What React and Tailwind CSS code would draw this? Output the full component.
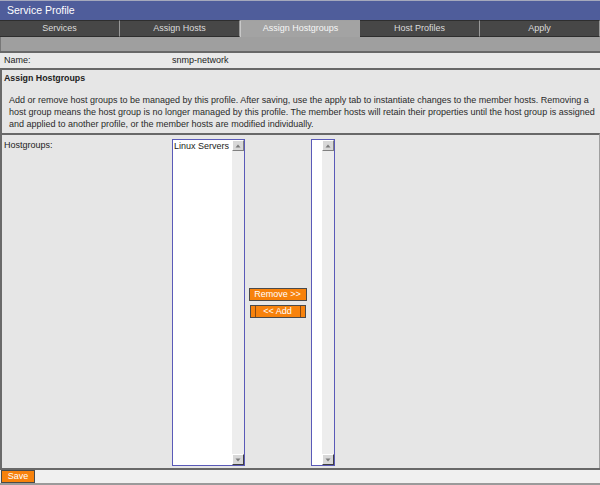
import React from 'react';

const tabs = ['Services', 'Assign Hosts', 'Assign Hostgroups', 'Host Profiles', 'Apply'];

function ScrollBar() {
  return (
    <div className="w-[12px] h-full flex flex-col bg-[#ededed]">
      <div className="h-[11px] w-[12px] bg-[#d8d8d8] border-t border-l border-t-white border-l-white border-r border-b border-r-[#808080] border-b-[#808080] flex items-center justify-center">
        <svg width="6" height="4" viewBox="0 0 6 4"><path d="M3 0.5 L5.5 3.5 L0.5 3.5 Z" fill="#7a7a7a" /></svg>
      </div>
      <div className="flex-1" />
      <div className="h-[11px] w-[12px] bg-[#d8d8d8] border-t border-l border-t-white border-l-white border-r border-b border-r-[#404040] border-b-[#404040] flex items-center justify-center">
        <svg width="6" height="4" viewBox="0 0 6 4"><path d="M0.5 0.5 L5.5 0.5 L3 3.5 Z" fill="#7a7a7a" /></svg>
      </div>
    </div>
  );
}

function ListBox({ width, items = [] }) {
  return (
    <div className={`${width} h-[327px] border border-[#5a5ab8] bg-white flex`}>
      <div className="flex-1 min-w-0 overflow-hidden pl-[1px] pt-[1px] text-[9px] leading-[11px] text-[#222] whitespace-nowrap">
        {items.map((it) => (
          <div key={it}>{it}</div>
        ))}
      </div>
      <ScrollBar />
    </div>
  );
}

export default function App() {
  return (
    <div
      className="w-[600px] h-[485px] flex flex-col bg-[#e6e6e6] overflow-hidden"
      style={{ fontFamily: '"Liberation Sans", Arial, sans-serif' }}
    >
      {/* title */}
      <div className="h-[20px] border-t border-[#a4a8bc] bg-[#4f5d9b] text-white text-[10.5px] pl-[7px] flex items-center">
        Service Profile
      </div>

      {/* tabs */}
      <div className="h-[17px] grid grid-cols-5 bg-[#a1a1a1]">
        {tabs.map((t, i) =>
          i === 2 ? (
            <div key={t} className="mt-[1px] bg-[#a3a3a3] border-l border-[#c8c8c8] text-[#f6f6f6] text-[9px] flex items-center justify-center">
              {t}
            </div>
          ) : (
            <div key={t} className="bg-[#474747] border-t border-b border-[#2e2e2e] border-r border-r-[#9a9a9a] text-[#dcdcdc] text-[9px] flex items-center justify-center">
              {t}
            </div>
          )
        )}
      </div>

      {/* gray strip */}
      <div className="h-[14px] bg-[#9f9f9f] border-l border-[#777]" />

      {/* name row */}
      <div className="h-[17px] border-t-2 border-[#686868] bg-[#e9e9e9] flex items-center text-[9px] text-[#222]">
        <div className="w-[172px] pl-[4px]">Name:</div>
        <div>snmp-network</div>
      </div>

      {/* description */}
      <div className="h-[65px] border-t-2 border-[#686868] border-l-2 border-l-[#6a6a6a] bg-[#e6e6e6] pt-[3px] text-[#222]">
        <div className="pl-[2px] text-[8.8px] font-bold leading-[11px]">Assign Hostgroups</div>
        <div className="pl-[7px] mt-[10px] text-[9px] leading-[12px] text-[#2a2a2a]">
          Add or remove host groups to be managed by this profile. After saving, use the apply tab to instantiate changes to the member hosts. Removing a<br />
          host group means the host group is no longer managed by this profile. The member hosts will retain their properties until the host group is assigned<br />
          and applied to another profile, or the member hosts are modified individually.
        </div>
      </div>

      {/* hostgroups */}
      <div className="h-[335px] border-t-2 border-[#686868] border-l-2 border-l-[#6a6a6a] border-r border-r-[#a0a0a0] bg-[#e6e6e6] flex pt-[4px]">
        <div className="w-[170px] pl-[2px] pt-[1px] text-[9px] text-[#222] leading-[11px]">Hostgroups:</div>
        <ListBox width="w-[73px]" items={['Linux Servers']} />
        <div className="w-[66px] h-[327px] flex flex-col justify-center items-center gap-[4px]">
          <button className="w-[58px] h-[13px] bg-[#f7820c] border border-[#4a4a4a] text-white text-[9px] leading-[11px] ml-[-1px]">
            Remove &gt;&gt;
          </button>
          <button className="w-[56px] h-[13px] bg-[#f7820c] border border-[#4a4a4a] text-white text-[9px] leading-[11px] ml-[-1px] relative">
            <span className="absolute left-[4px] top-0 bottom-0 w-px bg-[#8a4a10]" />
            &lt;&lt; Add
            <span className="absolute right-[4px] top-0 bottom-0 w-px bg-[#8a4a10]" />
          </button>
        </div>
        <ListBox width="w-[24px]" />
      </div>

      {/* footer */}
      <div className="h-[17px] border-t-2 border-[#686868] border-b-2 border-b-[#9a9a9a] bg-[#f0f0f0] flex items-center pl-[1px]">
        <button className="w-[34px] h-[13px] bg-[#f7820c] border border-[#4a4a4a] text-white text-[9px] leading-[11px]">
          Save
        </button>
      </div>
    </div>
  );
}
